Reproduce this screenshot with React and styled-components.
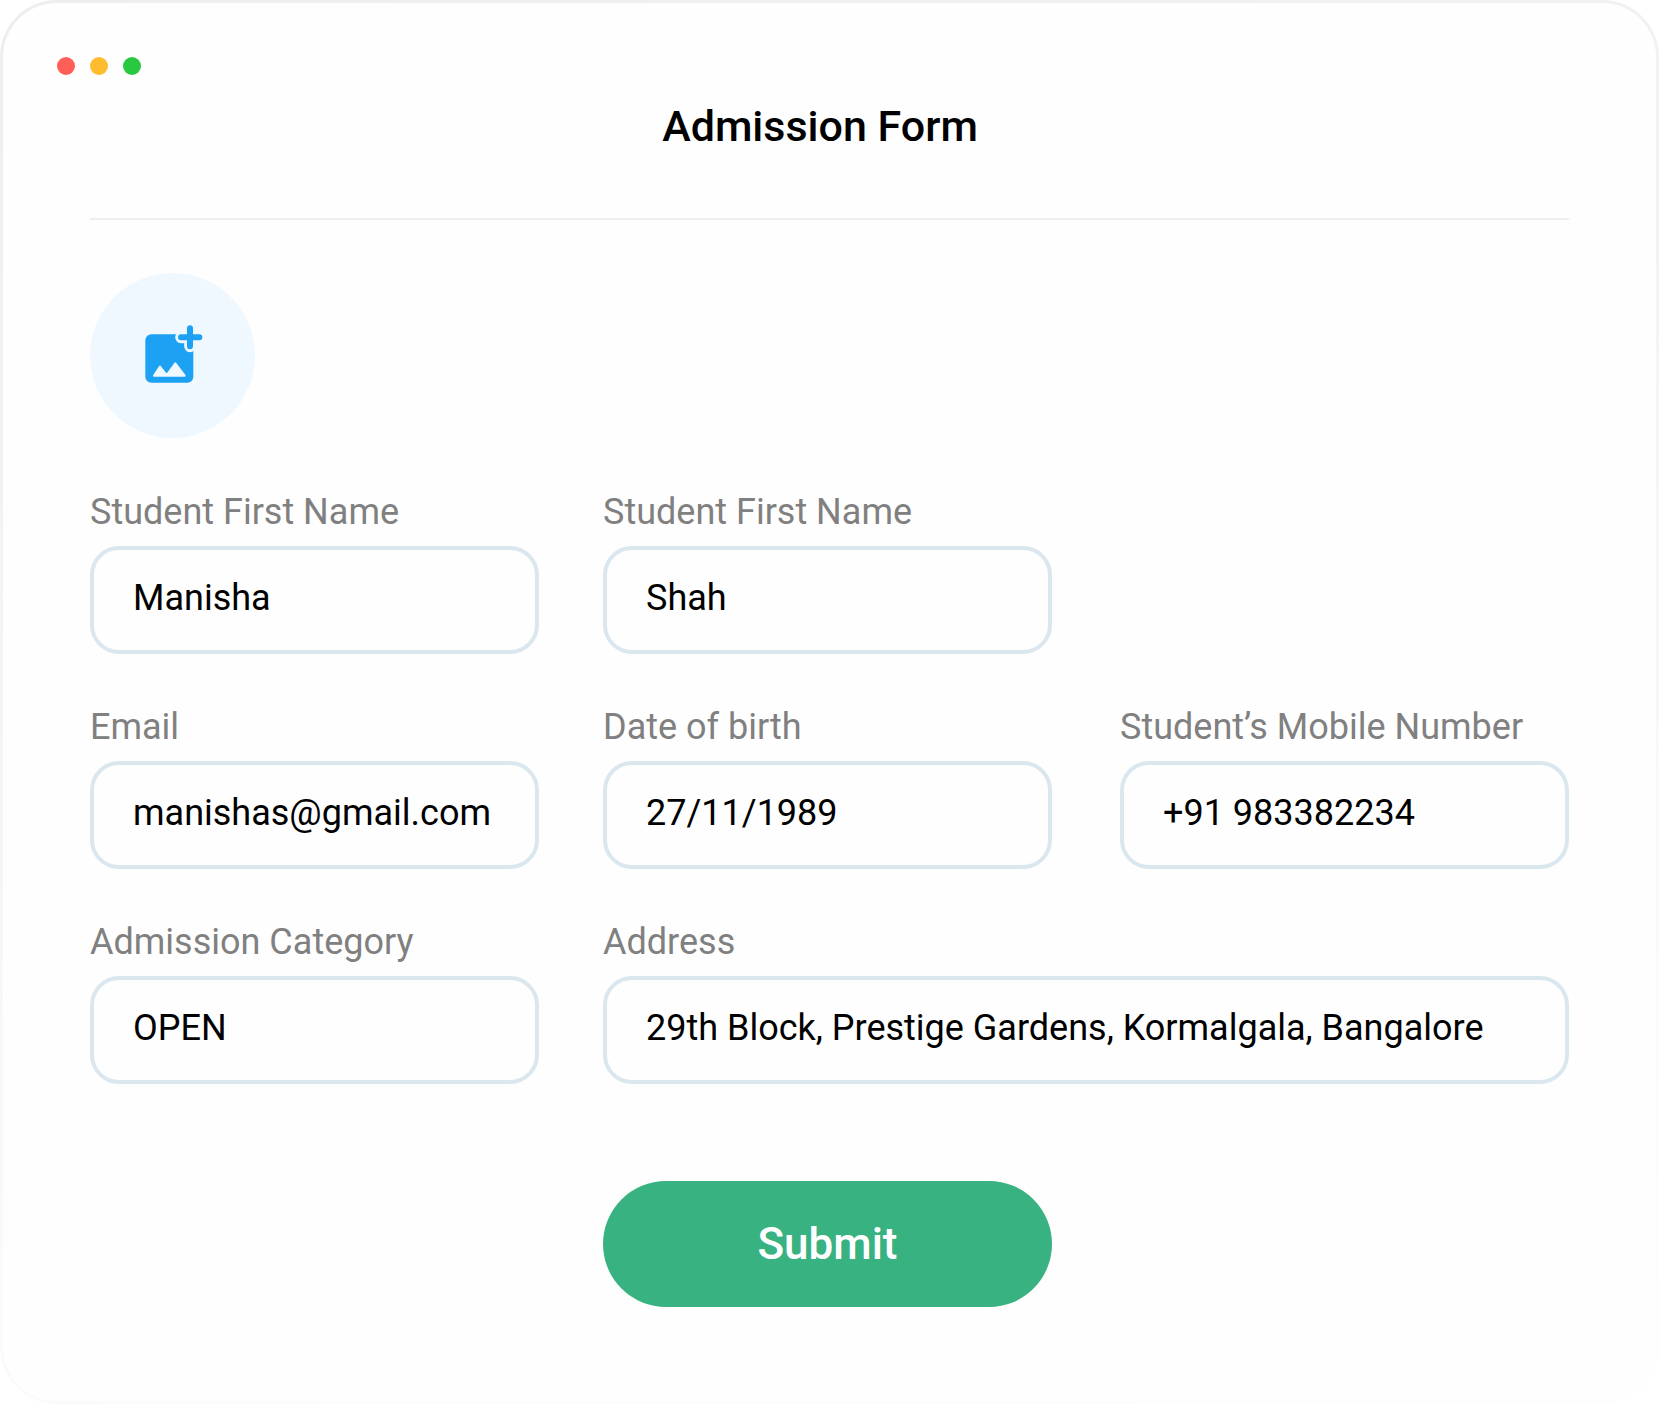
import React from "react";
import styled, { createGlobalStyle } from "styled-components";

const GlobalStyle = createGlobalStyle`
  *, *::before, *::after { box-sizing: border-box; }
  body {
    margin: 0;
    background: #fff;
    color: #000;
    font-family: Roboto, "Liberation Sans", sans-serif;
  }
`;

const Window = styled.main`
  padding: 54px 87px 94px;
  border: 3px solid transparent;
  border-radius: 57px;
  background:
    linear-gradient(#fefefe, #fefefe) padding-box,
    linear-gradient(168deg, #eeeeee, #fefefe) border-box;
`;

const WindowControls = styled.div`
  display: flex;
  gap: 15px;
  margin-left: -33px;
`;

const Dot = styled.span`
  width: 18px;
  height: 18px;
  border-radius: 50%;
  background: ${({ $color }) => $color};
`;

const Header = styled.header`
  padding: 25px 19px 66px 0;
  border-bottom: 2px solid #eeeeee;
  text-align: center;
`;

const Title = styled.h1`
  margin: 0;
  font-size: 43px;
  font-weight: 500;
  line-height: 52px;
`;

const Form = styled.form`
  display: flex;
  flex-direction: column;
  padding-top: 53px;
`;

const PhotoButton = styled.button`
  display: flex;
  align-items: center;
  justify-content: center;
  width: 165px;
  height: 165px;
  margin-bottom: 53px;
  padding: 0;
  border: 0;
  border-radius: 50%;
  background: #f0f8ff;
  color: #1da1f2;
  cursor: pointer;
`;

const Columns = styled.div`
  display: grid;
  grid-template-columns:
    [first] minmax(0, 1fr) [first-end] 64px
    [second] minmax(0, 1fr) [second-end] 68px
    [third] minmax(0, 1fr) [third-end];
  row-gap: 52px;
`;

const Field = styled.div`
  display: flex;
  flex-direction: column;
  gap: 13px;
  grid-column: ${({ $from, $to }) => `${$from} / ${$to || $from}-end`};
`;

const Label = styled.label`
  color: #808080;
  font-size: 36px;
  line-height: 42px;
  white-space: nowrap;
`;

const TextInput = styled.input`
  width: 100%;
  height: 108px;
  padding: 0 36px 4px 39px;
  border: 4px solid #dae7ee;
  border-radius: 29px;
  background: transparent;
  color: #000;
  font-family: inherit;
  font-size: 36px;
  outline: none;
`;

const Actions = styled(Columns)`
  padding-top: 97px;
`;

const SubmitButton = styled.button`
  grid-column: second / second-end;
  height: 126px;
  border: 0;
  border-radius: 63px;
  background: #38b281;
  color: #fff;
  font-family: inherit;
  font-size: 44px;
  font-weight: 500;
  cursor: pointer;
`;

const fields = [
  { id: "first-name", label: "Student First Name", value: "Manisha", from: "first" },
  { id: "last-name", label: "Student First Name", value: "Shah", from: "second" },
  { id: "email", label: "Email", value: "manishas@gmail.com", type: "email", from: "first" },
  { id: "birth", label: "Date of birth", value: "27/11/1989", from: "second" },
  { id: "mobile", label: "Student’s Mobile Number", value: "+91 983382234", type: "tel", from: "third" },
  { id: "category", label: "Admission Category", value: "OPEN", from: "first" },
  {
    id: "address",
    label: "Address",
    value: "29th Block, Prestige Gardens, Kormalgala, Bangalore",
    from: "second",
    to: "third",
  },
];

function AddPhotoIcon() {
  return (
    <svg width="62" height="62" viewBox="186 195 186 186" aria-hidden="true">
      <rect x="196" y="223" width="144" height="145" rx="18" fill="currentColor" />
      <path
        d="M303 232H330V259M330 232H358M330 232V205"
        fill="none"
        stroke="#f0f8ff"
        strokeWidth="35"
        strokeLinecap="round"
      />
      <path
        d="M303 232H358M330 205V259"
        fill="none"
        stroke="currentColor"
        strokeWidth="18"
        strokeLinecap="round"
      />
      <path
        d="M222 347L240 320L260 345L286 310L314 347Z"
        fill="#f0f8ff"
        stroke="#f0f8ff"
        strokeWidth="6"
        strokeLinejoin="round"
      />
    </svg>
  );
}

export default function App() {
  return (
    <>
      <GlobalStyle />
      <Window>
        <WindowControls>
          <Dot $color="#ff5f57" />
          <Dot $color="#febc2e" />
          <Dot $color="#28c840" />
        </WindowControls>
        <Header>
          <Title>Admission Form</Title>
        </Header>
        <Form onSubmit={(event) => event.preventDefault()}>
          <PhotoButton type="button" aria-label="Add photo">
            <AddPhotoIcon />
          </PhotoButton>
          <Columns>
            {fields.map(({ id, label, value, type = "text", from, to }) => (
              <Field key={id} $from={from} $to={to}>
                <Label htmlFor={id}>{label}</Label>
                <TextInput id={id} type={type} defaultValue={value} />
              </Field>
            ))}
          </Columns>
          <Actions>
            <SubmitButton type="submit">Submit</SubmitButton>
          </Actions>
        </Form>
      </Window>
    </>
  );
}
